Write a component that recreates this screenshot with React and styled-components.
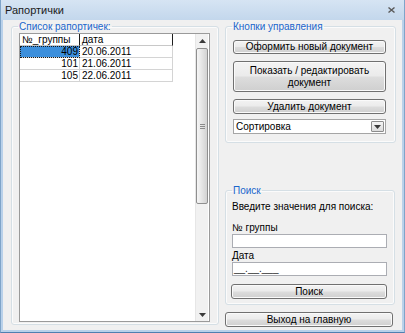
import React from 'react';
import styled, { createGlobalStyle } from 'styled-components';

const Global = createGlobalStyle`
  html, body { margin: 0; padding: 0; background: #fff; }
  body { font-family: "Liberation Sans", Arial, sans-serif; font-size: 10px; color: #000; }
  * { box-sizing: border-box; }
`;

const Window = styled.div`
  width: 405px;
  height: 333px;
  display: flex;
  flex-direction: column;
  background: #b9d1ea;
  border-left: 1px solid #7fa4c9;
  border-right: 1px solid #7fa4c9;
  border-bottom: 1px solid #4f7fb0;
`;

const TitleBar = styled.div`
  height: 20px;
  flex: none;
  display: flex;
  align-items: center;
  justify-content: space-between;
  padding: 0 9px 0 4px;
  background: linear-gradient(#d6e4f3, #c3d7ec);
  font-size: 11px;
  color: #1b1b1b;
`;

const Client = styled.div`
  flex: 1;
  min-height: 0;
  margin: 0 2px 2px 2px;
  background: #f0f0f0;
  display: flex;
  gap: 6px;
  padding: 0 6px 0 8px;
`;

const Group = styled.fieldset`
  margin: 0;
  padding: 0;
  min-width: 0;
  border: 1px solid #d5dfe5;
  border-radius: 3px;
  box-shadow: inset 0 0 0 1px #fbfbfb;
  display: flex;
  flex-direction: column;
`;

const Legend = styled.legend`
  margin-left: 6px;
  padding: 0 1px;
  line-height: 13px;
  color: #1a66cc;
`;

const LeftGroup = styled(Group)`
  width: 208px;
  margin-bottom: 5px;
`;

const LeftBody = styled.div`
  flex: 1;
  min-height: 0;
  display: flex;
  padding: 0 8px 2px 7px;
`;

const ListBox = styled.div`
  flex: 1;
  display: flex;
  border: 1px solid #9a9a9a;
  background: #fff;
`;

const Grid = styled.div`
  flex: 1;
  display: flex;
  flex-direction: column;
`;

const Row = styled.div`
  display: flex;
  height: ${p => p.$h}px;
`;

const HeadCell = styled.div`
  width: ${p => p.$w}px;
  border-right: 1px solid #1e1e1e;
  border-bottom: 1px solid #c8c8c8;
  padding-left: 2px;
  line-height: 11px;
  white-space: nowrap;
  overflow: hidden;
`;

const Cell = styled.div`
  width: ${p => p.$w}px;
  border-right: 1px solid #d4d4d4;
  border-bottom: 1px solid #d4d4d4;
  line-height: 11px;
  text-align: ${p => (p.$right ? 'right' : 'left')};
  padding: 0 1px 0 2px;
  background: ${p => (p.$sel ? '#3c8fdc' : '#fff')};
  outline: ${p => (p.$sel ? '1px dotted #1a1a1a' : 'none')};
  outline-offset: -1px;
  white-space: nowrap;
`;

const ScrollBar = styled.div`
  width: 13px;
  margin-right: 1px;
  display: flex;
  flex-direction: column;
  background: #f1f1f1;
  border-left: 1px solid #e6e6e6;
`;

const ScrollBtn = styled.div`
  height: 13px;
  flex: none;
  display: flex;
  align-items: center;
  justify-content: center;
`;

const Track = styled.div`
  flex: 1;
  display: flex;
  flex-direction: column;
  padding: 1px 0 0 0;
`;

const Thumb = styled.div`
  height: 156px;
  border: 1px solid #8f8f8f;
  border-radius: 2px;
  background: linear-gradient(to right, #f6f6f6, #e6e6e6 45%, #d2d2d2);
  display: flex;
  align-items: center;
  justify-content: center;
`;

const Grip = styled.div`
  width: 5px;
  height: 5px;
  border-top: 1px solid #8a8a8a;
  border-bottom: 1px solid #8a8a8a;
  position: relative;
  &::after {
    content: '';
    position: absolute;
    left: 0;
    right: 0;
    top: 1px;
    border-top: 1px solid #8a8a8a;
  }
`;

const RightCol = styled.div`
  width: 171px;
  display: flex;
  flex-direction: column;
  padding-bottom: 3px;
`;

const ButtonsBody = styled.div`
  display: flex;
  flex-direction: column;
  padding: 7px 9px 8px 7px;
`;

const Button = styled.button`
  height: ${p => p.$h}px;
  margin: 0 0 ${p => p.$mb || 0}px ${p => p.$ml || 0}px;
  padding: 0;
  border: 1px solid #707070;
  border-radius: 3px;
  background: linear-gradient(#f3f3f3 0%, #ebebeb 48%, #dddddd 52%, #cfcfcf 100%);
  box-shadow: inset 0 0 0 1px #fafafa;
  font-family: "Liberation Sans", Arial, sans-serif;
  font-size: 10px;
  line-height: 12px;
  color: #000;
  text-align: center;
  width: ${p => (p.$w ? `${p.$w}px` : 'auto')};
`;

const Combo = styled.div`
  height: 15px;
  display: flex;
  align-items: center;
  justify-content: space-between;
  border: 1px solid #a5a5a5;
  background: #fff;
  padding: 0 1px 0 2px;
`;

const ComboArrow = styled.div`
  width: 13px;
  height: 11px;
  border: 1px solid #8c8c8c;
  border-radius: 1px;
  background: linear-gradient(#f4f4f4, #dcdcdc);
  display: flex;
  align-items: center;
  justify-content: center;
`;

const SearchGroup = styled(Group)`
  margin-top: auto;
  width: 170px;
`;

const SearchBody = styled.div`
  display: flex;
  flex-direction: column;
  padding: 3px 7px 5px 6px;
`;

const Label = styled.div`
  line-height: 13px;
  white-space: nowrap;
  margin-bottom: ${p => p.$mb || 0}px;
`;

const Input = styled.div`
  height: 14px;
  border: 1px solid #abadb3;
  background: #fff;
  line-height: 12px;
  padding-left: 1px;
  margin-bottom: ${p => p.$mb || 0}px;
  color: #222;
`;

const ExitButton = styled(Button)`
  margin-top: 7px;
  width: 168px;
  height: 15px;
`;

const Tri = ({ down }) => (
  <svg width="7" height="4" viewBox="0 0 7 4">
    <path d={down ? 'M0 0H7L3.5 4Z' : 'M0 4H7L3.5 0Z'} fill="#3a3a3a" />
  </svg>
);

const rows = [
  { n: '409', d: '20.06.2011', sel: true },
  { n: '101', d: '21.06.2011' },
  { n: '105', d: '22.06.2011' },
];

export default function App() {
  return (
    <>
      <Global />
      <Window>
        <TitleBar>
          <span>Рапортички</span>
          <svg width="7" height="6" viewBox="0 0 7 6">
            <path d="M0.5 0.5L6.5 5.5M6.5 0.5L0.5 5.5" stroke="#5a5a5a" strokeWidth="1.4" />
          </svg>
        </TitleBar>
        <Client>
          <LeftGroup>
            <Legend>Список рапортичек:</Legend>
            <LeftBody>
              <ListBox>
                <Grid>
                  <Row $h={12}>
                    <HeadCell $w={60}>№_группы</HeadCell>
                    <HeadCell $w={93}>дата</HeadCell>
                  </Row>
                  {rows.map(r => (
                    <Row $h={12} key={r.n}>
                      <Cell $w={60} $right $sel={r.sel}>{r.n}</Cell>
                      <Cell $w={93}>{r.d}</Cell>
                    </Row>
                  ))}
                </Grid>
                <ScrollBar>
                  <ScrollBtn><Tri /></ScrollBtn>
                  <Track>
                    <Thumb><Grip /></Thumb>
                  </Track>
                  <ScrollBtn><Tri down /></ScrollBtn>
                </ScrollBar>
              </ListBox>
            </LeftBody>
          </LeftGroup>
          <RightCol>
            <Group>
              <Legend>Кнопки управления</Legend>
              <ButtonsBody>
                <Button $h={14} $mb={7}>Оформить новый документ</Button>
                <Button $h={31} $mb={7}>Показать / редактировать<br />документ</Button>
                <Button $h={15} $mb={5}>Удалить документ</Button>
                <Combo>
                  <span>Сортировка</span>
                  <ComboArrow><Tri down /></ComboArrow>
                </Combo>
              </ButtonsBody>
            </Group>
            <SearchGroup>
              <Legend>Поиск</Legend>
              <SearchBody>
                <Label $mb={8}>Введите значения для поиска:</Label>
                <Label>№ группы</Label>
                <Input $mb={1} />
                <Label>Дата</Label>
                <Input $mb={8}>__.__.___</Input>
                <Button $h={15} $ml={-1}>Поиск</Button>
              </SearchBody>
            </SearchGroup>
            <ExitButton>Выход на главную</ExitButton>
          </RightCol>
        </Client>
      </Window>
    </>
  );
}
